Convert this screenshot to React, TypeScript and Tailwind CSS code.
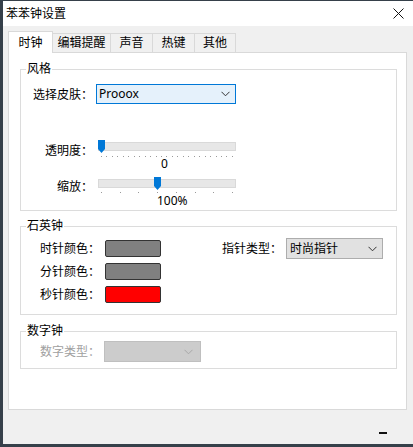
import React from "react";

function Chevron({ color = "#333" }: { color?: string }) {
  return (
    <svg width="9" height="6" viewBox="0 0 9 6" className="block">
      <polyline points="0.5,0.8 4.5,4.8 8.5,0.8" fill="none" stroke={color} strokeWidth="1" />
    </svg>
  );
}

function Thumb() {
  return (
    <svg width="7" height="13" viewBox="0 0 7 13" className="block">
      <path d="M0 0 H7 V9 L3.5 13 L0 9 Z" fill="#0078d7" />
    </svg>
  );
}

function Slider({ thumbLeft, ticks, tickMt, value, valuePl, valueMt }: { thumbLeft: number; ticks: number; tickMt: string; value: string; valuePl: string; valueMt: string }) {
  return (
    <div className="w-[138px]">
      <div className="relative h-[13px]">
        <div className="absolute left-0 right-0 top-[2px] h-[9px] bg-[#e7e7e7] border border-[#d9d9d9]" />
        <div className="absolute top-0" style={{ left: thumbLeft }}>
          <Thumb />
        </div>
      </div>
      <div className={`${tickMt} px-[3px] flex justify-between h-[1px]`}>
        {Array.from({ length: ticks }).map((_, i) => (
          <div key={i} className="w-[1px] h-[1px] bg-[#9a9a9a]" />
        ))}
      </div>
      <div className={`${valueMt} ${valuePl} text-[12px] leading-[12px] text-black`}>{value}</div>
    </div>
  );
}

function Group({ title, className, children }: { title: string; className: string; children?: React.ReactNode }) {
  return (
    <div className={`relative ml-[11px] w-[377px] border border-[#dcdcdc] ${className}`}>
      <div className="absolute -top-[9px] left-[5px] bg-white px-[1px] text-[12px] leading-[16px] text-black">{title}</div>
      {children}
    </div>
  );
}

function Swatch({ color }: { color: string }) {
  return <div className="ml-[5px] w-[56px] h-[17px] rounded-[2px] border border-[#333]" style={{ background: color }} />;
}

export default function App() {
  return (
    <div className="w-[413px] h-[447px] bg-[#36404a] overflow-hidden [font-family:'Noto_Sans','Noto_Sans_CJK_SC',sans-serif] text-black">
      <div className="ml-[3px] mt-[1px] w-[410px] h-[443px] bg-[#f0f0f0] flex flex-col">
        {/* title bar */}
        <div className="h-[25px] bg-white flex items-center justify-between pl-[3px] pr-[9px]">
          <span className="text-[12px] leading-[16px]">苯苯钟设置</span>
          <svg width="11" height="11" viewBox="0 0 11 11" className="block">
            <path d="M0.5 0.5 L10.5 10.5 M10.5 0.5 L0.5 10.5" stroke="#111" strokeWidth="1" />
          </svg>
        </div>
        {/* tabs */}
        <div className="mt-[5px] h-[21px] pl-[5px] flex items-end">
          <div className="relative z-10 -mb-[1px] h-[22px] w-[45px] bg-white border-t border-l border-r border-[#d9d9d9] flex items-center justify-center text-[12px] leading-[16px]">
            时钟
          </div>
          <div className="h-[19px] w-[58px] border-t border-r border-[#d9d9d9] flex items-center justify-center text-[12px] leading-[16px]">
            编辑提醒
          </div>
          <div className="h-[19px] w-[42px] border-t border-r border-[#d9d9d9] flex items-center justify-center text-[12px] leading-[16px]">
            声音
          </div>
          <div className="h-[19px] w-[42px] border-t border-r border-[#d9d9d9] flex items-center justify-center text-[12px] leading-[16px]">
            热键
          </div>
          <div className="h-[19px] w-[41px] border-t border-r border-[#d9d9d9] flex items-center justify-center text-[12px] leading-[16px]">
            其他
          </div>
        </div>
        {/* panel */}
        <div className="ml-[5px] w-[399px] h-[358px] bg-white border border-[#d9d9d9] flex flex-col">
          <Group title="风格" className="mt-[16px] h-[142px]">
            <div className="mt-[14px] flex items-center h-[20px]">
              <div className="w-[72px] text-right text-[12px] leading-[16px] pt-[2px]">选择皮肤：</div>
              <div className="ml-[3px] w-[140px] h-[20px] bg-[#e5f1fb] border border-[#0078d7] flex items-center justify-between pl-[2px] pr-[5px]">
                <span className="text-[12px] leading-[16px]">Prooox</span>
                <Chevron />
              </div>
            </div>
            <div className="mt-[36px] flex items-start">
              <div className="w-[72px] mt-[3px] text-right text-[12px] leading-[16px]">透明度：</div>
              <div className="ml-[5px]">
                <Slider thumbLeft={0} ticks={25} tickMt="mt-[3px]" value="0" valuePl="pl-[63px]" valueMt="mt-[1px]" />
              </div>
            </div>
            <div className="mt-[7px] flex items-start">
              <div className="w-[72px] mt-[2px] text-right text-[12px] leading-[16px]">缩放：</div>
              <div className="ml-[5px]">
                <Slider thumbLeft={56} ticks={8} tickMt="mt-[2px]" value="100%" valuePl="pl-[59px]" valueMt="mt-[2px]" />
              </div>
            </div>
          </Group>

          <Group title="石英钟" className="mt-[15px] h-[89px]">
            <div className="mt-[11px] flex items-center h-[21px]">
              <div className="w-[79px] text-right text-[12px] leading-[16px]">时针颜色：</div>
              <Swatch color="#808080" />
              <div className="ml-[61px] text-[12px] leading-[16px]">指针类型：</div>
              <div className="ml-[4px] w-[97px] h-[21px] bg-[#e1e1e1] border border-[#adadad] flex items-center justify-between pl-[3px] pr-[5px]">
                <span className="text-[12px] leading-[16px]">时尚指针</span>
                <Chevron />
              </div>
            </div>
            <div className="mt-[2px] flex items-center h-[21px]">
              <div className="w-[79px] text-right text-[12px] leading-[16px]">分针颜色：</div>
              <Swatch color="#808080" />
            </div>
            <div className="mt-[2px] flex items-center h-[21px]">
              <div className="w-[79px] text-right text-[12px] leading-[16px]">秒针颜色：</div>
              <Swatch color="#ff0000" />
            </div>
          </Group>

          <Group title="数字钟" className="mt-[16px] h-[38px]">
            <div className="mt-[9px] flex items-center h-[21px]">
              <div className="w-[79px] text-right text-[12px] leading-[16px] text-[#a0a0a0]">数字类型：</div>
              <div className="ml-[4px] w-[97px] h-[21px] bg-[#cccccc] border border-[#bfbfbf] flex items-center justify-end pr-[7px]">
                <Chevron color="#a8a8a8" />
              </div>
            </div>
          </Group>
        </div>
        {/* footer */}
        <div className="flex justify-end pr-[26px] pt-[22px]">
          <div className="w-[8px] h-[2px] bg-[#111]" />
        </div>
      </div>
    </div>
  );
}
